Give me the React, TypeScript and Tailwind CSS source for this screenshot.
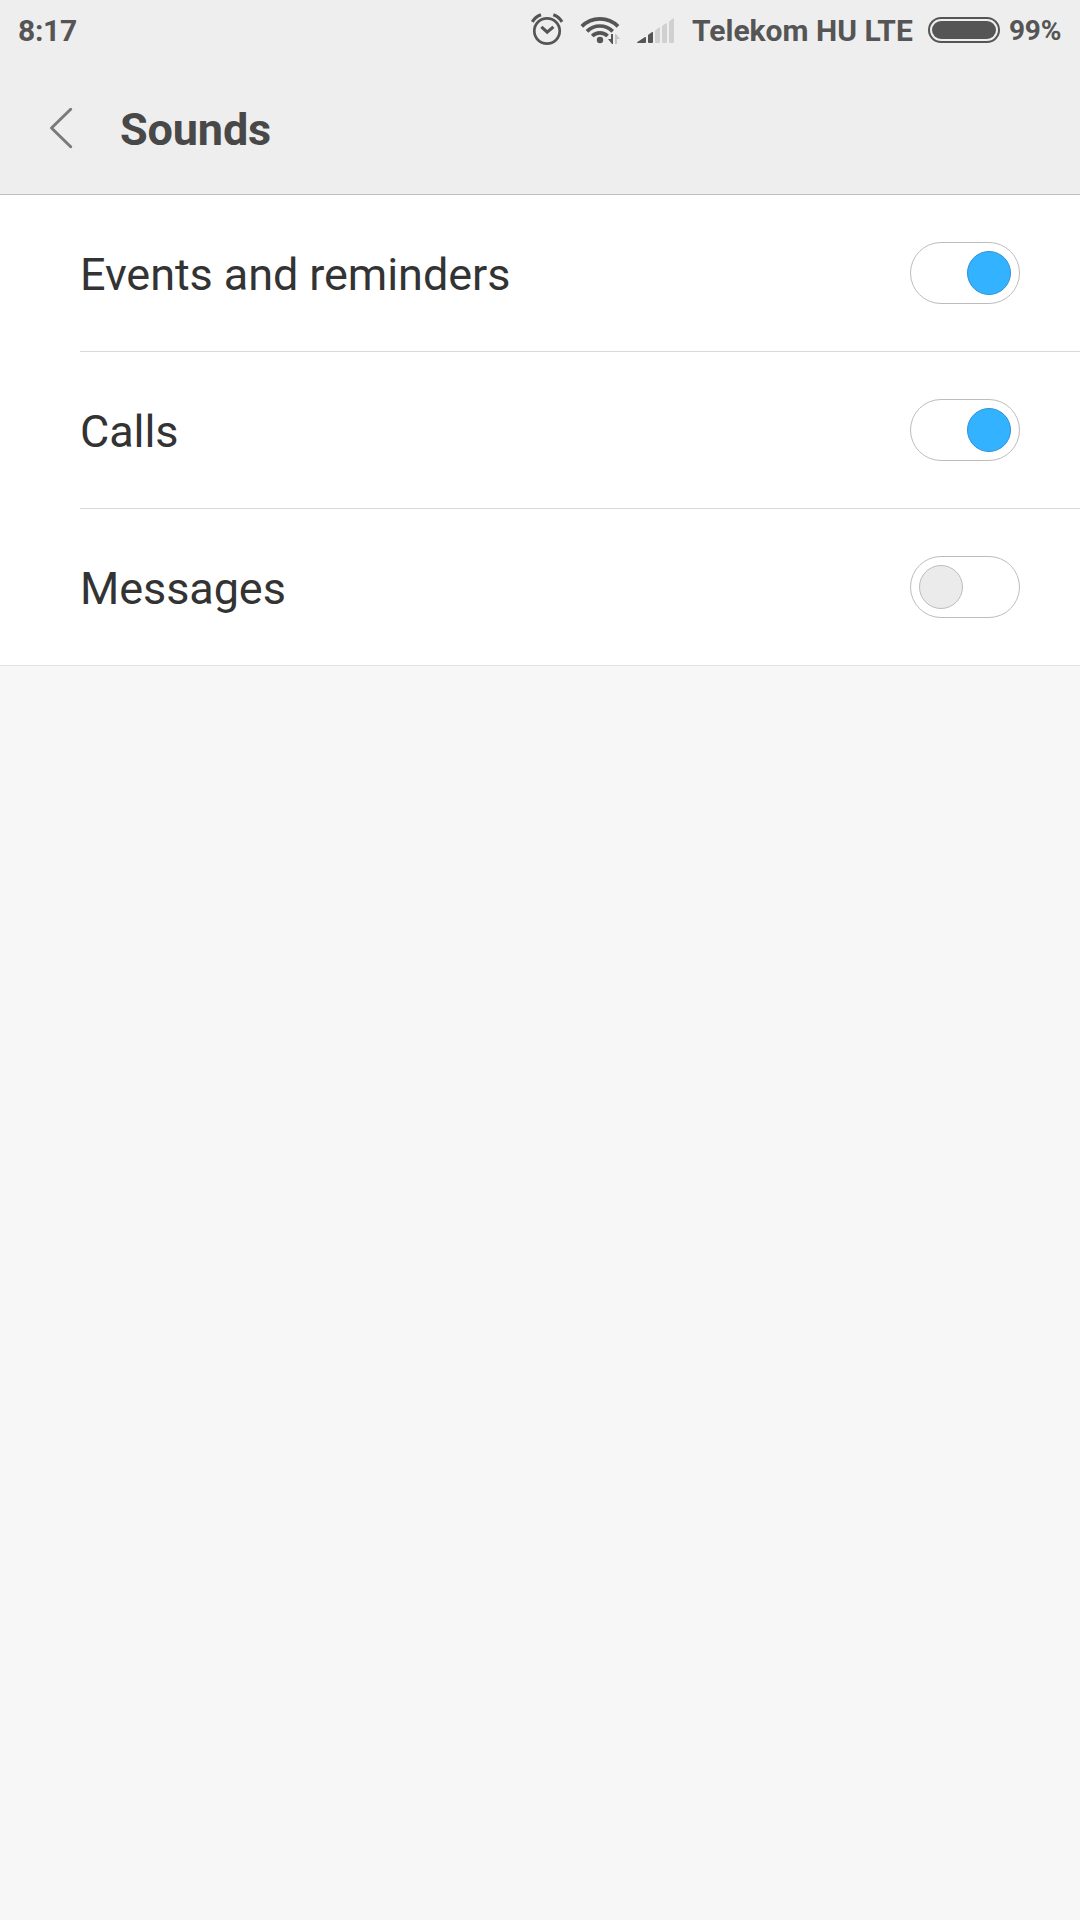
import { useState } from "react";

function AlarmIcon() {
  return (
    <svg width="34" height="34" viewBox="530 13 34 34" fill="none" stroke="#555" className="shrink-0">
      <circle cx="547" cy="31" r="12.7" strokeWidth="2.7" />
      <path d="M541.4 26.9 L547.2 32.2 L553.4 26.9" strokeWidth="3.2" />
      <path d="M532.3 21.9 Q535.3 16.9 541 14.8" strokeWidth="3.2" />
      <path d="M562 21.9 Q559 16.9 553.3 14.8" strokeWidth="3.2" />
    </svg>
  );
}

function WifiIcon() {
  return (
    <svg width="42" height="34" viewBox="579 13 42 34" fill="none" className="shrink-0">
      <g stroke="#555" strokeWidth="3.7">
        <path d="M581.8 26.4 A25.5 25.5 0 0 1 618 26.4" />
        <path d="M587 31.4 A18 18 0 0 1 612.7 31.4" />
        <path d="M592.2 36 A11 11 0 0 1 607.6 36" />
      </g>
      <circle cx="600" cy="40" r="3.2" fill="#555" />
      <path d="M611 34 H613 V44 H612 L608 39 H611 Z" fill="#555" />
      <path d="M615 44 V34 H616 L620 39 H617 V44 Z" fill="#c4c4c4" />
    </svg>
  );
}

function SignalIcon() {
  return (
    <svg width="38" height="34" viewBox="637 13 38 34" className="shrink-0">
      <g fill="#555">
        <path d="M637 42.2 L645 37 Q646 36.7 646 37.7 V42 Q646 43 645 43 H637.5 Z" />
        <path d="M648 35 L652 32 Q653 31.6 653 32.6 V42 Q653 43 652 43 H649 Q648 43 648 42 Z" />
      </g>
      <g fill="#d0d0d0">
        <path d="M655 30.5 L659 27.5 Q660 27 660 28 V42 Q660 43 659 43 H656 Q655 43 655 42 Z" />
        <path d="M662 26 L666 23.3 Q667 22.8 667 23.8 V42 Q667 43 666 43 H663 Q662 43 662 42 Z" />
        <path d="M669 21.5 L673 18.5 Q674 18 674 19 V42 Q674 43 673 43 H670 Q669 43 669 42 Z" />
      </g>
    </svg>
  );
}

function Toggle({ on, label, onChange }: { on: boolean; label: string; onChange: () => void }) {
  return (
    <button
      role="switch"
      aria-checked={on}
      aria-label={label}
      onClick={onChange}
      className={`flex h-[62px] w-[110px] shrink-0 items-center rounded-full border border-[#bdbdbd] bg-white px-2 ${on ? "justify-end" : "justify-start"}`}
    >
      <span
        className={`size-11 rounded-full border ${on ? "border-[#2c93d9] bg-[#33b2ff]" : "border-[#bdbdbd] bg-[#ebebeb]"}`}
      />
    </button>
  );
}

const initial = [
  { label: "Events and reminders", on: true },
  { label: "Calls", on: true },
  { label: "Messages", on: false },
];

export default function App() {
  const [items, setItems] = useState(initial);
  const toggle = (i: number) =>
    setItems(items.map((it, j) => (j === i ? { ...it, on: !it.on } : it)));

  return (
    <div className="flex h-[1920px] w-[1080px] flex-col overflow-hidden bg-[#f7f7f7] font-[Roboto,sans-serif]">
      <header className="h-[195px] shrink-0 border-b border-[#c0c0c0] bg-[#eeeeee]">
        <div className="flex h-[60px] items-center text-[30px] leading-[60px] font-bold whitespace-nowrap text-[#555]">
          <span className="w-[512px] pt-px pl-[18px] tracking-[-0.3px]">8:17</span>
          <div className="ml-[18px] flex items-center">
            <AlarmIcon />
            <div className="ml-[15px] flex">
              <WifiIcon />
            </div>
            <div className="ml-4 flex">
              <SignalIcon />
            </div>
          </div>
          <span className="ml-[17px] w-[236px] shrink-0 pt-px">Telekom HU LTE</span>
          <div className="h-[26px] w-[72px] shrink-0 rounded-full border-2 border-[#555] p-0.5">
            <div className="h-full rounded-full bg-[#555]" />
          </div>
          <span className="ml-[9px] pt-0.5 text-[28px] tracking-[-0.2px]">99%</span>
        </div>
        <div className="flex h-[134px] items-center">
          <button aria-label="Back" className="ml-12 pt-0.5">
            <svg width="26" height="42" viewBox="48 107 26 42" fill="none">
              <path d="M70.7 109.3 L51.5 128 L70.7 146.7" stroke="#7a7a7a" strokeWidth="3" strokeLinecap="round" strokeLinejoin="round" />
            </svg>
          </button>
          <h1 className="ml-[46px] pt-[5px] text-[45px] leading-[60px] font-bold tracking-[-0.15px] text-[#484848]">Sounds</h1>
        </div>
      </header>
      <main className="bg-white">
        {items.map((item, i) => (
          <div key={item.label} className={i === items.length - 1 ? "border-b border-[#e2e2e2]" : ""}>
            <div
              className={`ml-20 flex items-center justify-between pr-[60px] ${i === items.length - 1 ? "h-[156px]" : "h-[157px] border-b border-[#d9d9d9]"}`}
            >
              <span className="pt-[3px] text-[45px] leading-[60px] tracking-[-0.08px] text-[#333]">{item.label}</span>
              <Toggle on={item.on} label={item.label} onChange={() => toggle(i)} />
            </div>
          </div>
        ))}
      </main>
    </div>
  );
}
